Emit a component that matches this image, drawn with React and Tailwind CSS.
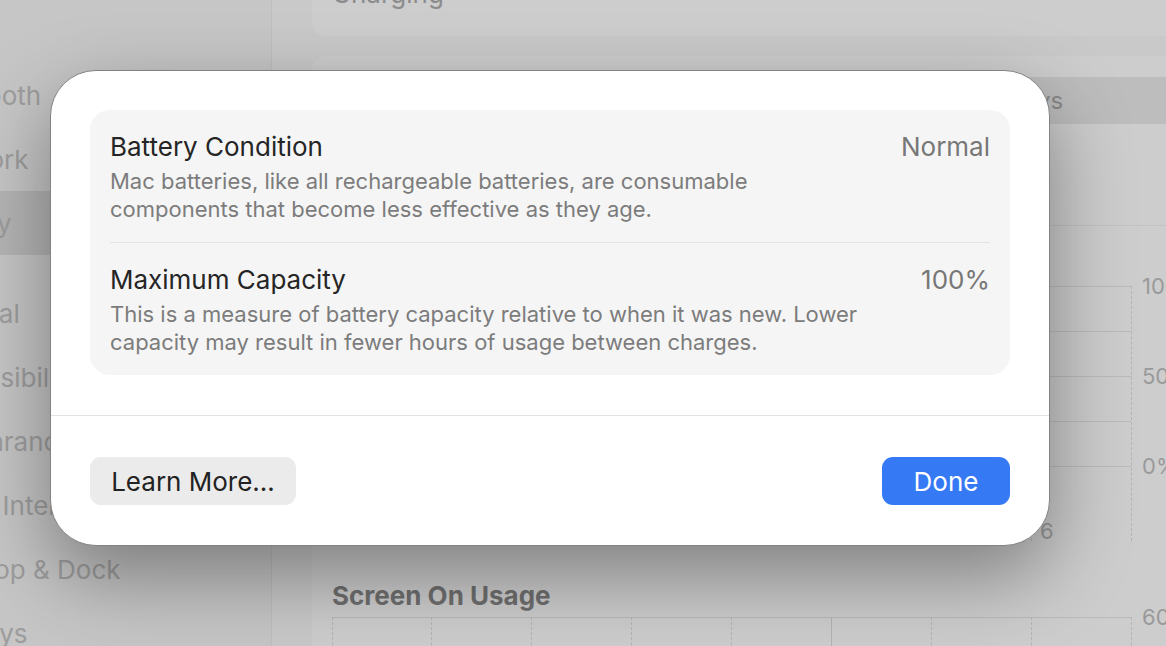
import React from "react";

const sidebarItems = [
  { label: "Bluetooth" },
  { label: "Network" },
  { label: "Battery", active: true },
  { label: "General", gap: true },
  { label: "Accessibility" },
  { label: "Appearance" },
  { label: "Apple Intelligence & Siri" },
  { label: "Desktop & Dock" },
  { label: "Displays" },
];

const hourLabels = ["9", "12 AM", "3", "6", "9", "12 PM", "3", "6"];

function Sidebar() {
  return (
    <aside className="w-[272px] shrink-0 bg-[#c6c6c6] border-r border-[#bebebe] pt-[63px] flex flex-col overflow-hidden">
      {sidebarItems.map((item) => (
        <div
          key={item.label}
          className={`h-[64px] shrink-0 flex items-center mr-[10px] rounded-r-[10px] ${
            item.active ? "bg-[#b5b5b5]" : ""
          } ${item.gap ? "mt-[26px]" : ""}`}
        >
          <span className="-ml-[76px] whitespace-nowrap text-[26px] text-[#9d9d9d]">
            {item.label}
          </span>
        </div>
      ))}
    </aside>
  );
}

// one hour-column of a usage chart: dashed right edge, solid row lines
function ChartColumn({ first, solid, label, rows, rowHeight, footer }) {
  return (
    <div
      className={`w-[100px] shrink-0 flex flex-col border-r ${
        solid ? "border-solid border-[#b4b4b4]" : "border-dashed border-[#b4b4b4]"
      } ${first ? "border-l border-l-dashed" : ""}`}
    >
      {Array.from({ length: rows }).map((_, i) => (
        <div key={i} className="border-t border-[#bababa]" style={{ height: rowHeight }} />
      ))}
      {footer && (
        <div className="h-[75px] border-t border-[#bababa] flex items-end pl-[8px]">
          <span className="text-[22px] leading-[20px] text-[#9a9a9a]">{label}</span>
        </div>
      )}
    </div>
  );
}

function Main() {
  return (
    <main className="w-[980px] shrink-0 pl-[40px] flex flex-col">
      {/* Charging card, scrolled mostly out of view */}
      <div className="w-[920px] h-[36px] shrink-0 rounded-b-[14px] bg-[#cdcdcd] px-[20px] overflow-hidden">
        <div className="-mt-[22px] text-[26px] leading-[32px] text-[#8c8c8c]">Charging</div>
      </div>

      <div className="mt-[20px] w-[920px] rounded-t-[14px] bg-[#cdcdcd] px-[20px] pt-[21px] flex flex-col">
        <div className="h-[47px] flex rounded-[10px] bg-[#c4c4c4]">
          <div className="flex-1 flex items-center justify-center text-[24px] text-[#8f8f8f]">
            Last 24 Hours
          </div>
          <div className="flex-1 flex items-center justify-center rounded-[10px] bg-[#bdbdbd] text-[24px] text-[#8a8a8a]">
            Last 10 Days
          </div>
        </div>

        <div className="h-[102px] border-b border-[#c2c2c2] flex items-end pb-[20px]">
          <span className="text-[24px] font-bold text-[#777]">Battery Level</span>
        </div>

        <div className="mt-[60px] flex">
          {hourLabels.map((label, i) => (
            <ChartColumn key={i} first={i === 0} label={label} rows={4} rowHeight={45} footer />
          ))}
          <div className="pl-[10px] -mt-[13px] flex flex-col text-[22px] leading-[26px] text-[#9a9a9a]">
            <span className="h-[90px]">100%</span>
            <span className="h-[90px]">50%</span>
            <span>0%</span>
          </div>
        </div>

        <div className="mt-[40px] text-[26px] leading-[30px] font-bold text-[#6f6f6f]">
          Screen On Usage
        </div>

        <div className="mt-[6px] flex">
          {hourLabels.map((label, i) => (
            <ChartColumn key={i} first={i === 0} solid={i === 4} rows={3} rowHeight={45} />
          ))}
          <div className="pl-[10px] -mt-[13px] text-[22px] leading-[26px] text-[#9a9a9a]">60m</div>
        </div>
      </div>
    </main>
  );
}

function InfoRow({ title, value, children, divider }) {
  return (
    <div className={`pt-[21px] pb-[19px] flex justify-between gap-[20px] ${divider ? "border-b border-[#e4e4e4]" : ""}`}>
      <div>
        <div className="text-[26px] leading-[32px] text-[#252525]">{title}</div>
        <p className="mt-[4px] text-[22px] leading-[28px] text-[#7c7c7c]">{children}</p>
      </div>
      <div className="text-[26px] leading-[32px] text-[#777] whitespace-nowrap">{value}</div>
    </div>
  );
}

function BatteryHealthSheet() {
  return (
    <div className="absolute left-[50px] top-[70px] w-[1000px] h-[476px] rounded-[46px] bg-white border border-[#828282] shadow-[0_30px_80px_rgba(0,0,0,0.38)] flex flex-col">
      <div className="pt-[39px] px-[39px]">
        <div className="rounded-[20px] bg-[#f5f5f5] px-[20px]">
          <InfoRow title="Battery Condition" value="Normal" divider>
            Mac batteries, like all rechargeable batteries, are consumable
            <br />
            components that become less effective as they age.
          </InfoRow>
          <InfoRow title="Maximum Capacity" value="100%">
            This is a measure of battery capacity relative to when it was new. Lower
            <br />
            capacity may result in fewer hours of usage between charges.
          </InfoRow>
        </div>
      </div>

      <div className="mt-[40px] border-t border-[#e2e2e2]" />

      <div className="pt-[41px] px-[39px] flex justify-between">
        <button className="w-[206px] h-[48px] rounded-[11px] bg-[#ebebeb] text-[26px] text-[#222]">
          Learn More…
        </button>
        <button className="w-[128px] h-[48px] rounded-[11px] bg-[#3679f5] text-[26px] text-white">
          Done
        </button>
      </div>
    </div>
  );
}

export default function App() {
  return (
    <div className="relative w-[1166px] h-[646px] overflow-hidden bg-[#c9c9c9] font-['Inter',sans-serif] flex">
      <Sidebar />
      <Main />
      <BatteryHealthSheet />
    </div>
  );
}
